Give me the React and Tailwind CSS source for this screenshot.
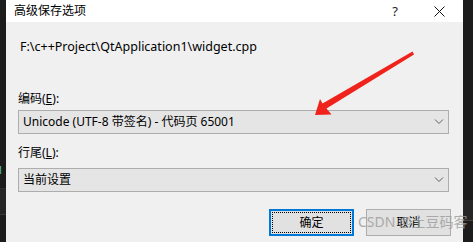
import { useState } from 'react';

const cjk = { fontFamily: '"Noto Sans", "Noto Sans CJK SC", sans-serif' };

function Chevron() {
  return (
    <svg className="w-[10px] h-[6px]" viewBox="0 0 10 6" fill="none" stroke="#5f5f5f" strokeWidth="1">
      <path d="M1 0.5L5 4.5L9 0.5" />
    </svg>
  );
}

function ComboBox({ value }) {
  return (
    <div className="mr-[2px] h-[24px] bg-[#e5e5e5] border border-[#adadad] flex items-center justify-between pl-[4px] pr-[4px]">
      <span className="text-[12px] leading-[16px] text-black">{value}</span>
      <Chevron />
    </div>
  );
}

export default function App() {
  const [encoding] = useState('Unicode (UTF-8 带签名) - 代码页 65001');

  return (
    <div className="relative flex w-[473px] h-[242px] bg-[#1c1c1c] overflow-hidden" style={cjk}>
      {/* editor behind, left edge */}
      <div className="w-[6px] flex flex-col">
        <div className="h-[165px]" />
        <div className="h-[10px] text-[11px] leading-[10px] text-[#4ec9b0] -ml-[3px]">1</div>
        <div className="h-[13px]" />
        <div className="h-[26px] bg-[#252526] border-t border-[#2f2f2f]" />
        <div className="h-px bg-[#3a3a3a]" />
      </div>

      {/* dialog */}
      <div className="w-[457px] flex flex-col">
        {/* title bar */}
        <div className="h-[22px] bg-white flex items-center pl-[8px]">
          <span className="text-[12px] leading-[16px] text-black">高级保存选项</span>
          <span className="ml-auto text-[13px] leading-[16px] text-[#222] mr-[36px]">?</span>
          <svg className="w-[11px] h-[11px] mr-[18px]" viewBox="0 0 11 11" stroke="#111" strokeWidth="1">
            <path d="M0.5 0.5L10.5 10.5M10.5 0.5L0.5 10.5" />
          </svg>
        </div>

        {/* body */}
        <div className="flex-1 bg-[#f0f0f0] pl-[12px] pr-[12px] flex flex-col">
          <div className="mt-[17px] ml-[2px] h-[16px] text-[12.5px] leading-[16px] text-black">
            F:\c++Project\QtApplication1\widget.cpp
          </div>

          <div className="mt-[36px] h-[16px] text-[12px] leading-[16px] text-black">
            编码(<span className="underline">E</span>):
          </div>
          <div className="mt-[3px]">
            <ComboBox value={encoding} />
          </div>

          <div className="mt-[11px] h-[16px] text-[12px] leading-[16px] text-black">
            行尾(<span className="underline">L</span>):
          </div>
          <div className="mt-[7px]">
            <ComboBox value="当前设置" />
          </div>

          <div className="mt-[17px] flex justify-end gap-[12px]">
            <button className="w-[85px] h-[27px] bg-[#e1e1e1] border-2 border-[#0078d7] p-[1px] flex">
              <span className="flex-1 border border-dotted border-black flex items-center justify-center text-[12px] text-black">
                确定
              </span>
            </button>
            <button className="w-[85px] h-[27px] bg-[#e1e1e1] border border-[#adadad] flex items-center justify-center text-[12px] text-black">
              取消
            </button>
          </div>
        </div>
      </div>

      {/* editor behind, right edge */}
      <div className="flex-1 flex flex-col">
        <div className="h-[200px]" />
        <div className="h-[20px] bg-[#262626]" />
        <div className="h-px bg-[#444]" />
      </div>

      {/* annotation arrow */}
      <svg className="absolute left-0 top-0 w-[473px] h-[242px] pointer-events-none" viewBox="0 0 473 242">
        <polygon
          fill="#f0231c"
          points="412.5,51.5 414,54.5 326.5,108.5 331.5,114.5 315,115 320,99 322.5,103.5"
        />
      </svg>

      {/* watermark */}
      <div className="absolute left-[358px] top-[212px] text-[14px] leading-[20px] text-[#9c9c9c] opacity-80 whitespace-nowrap pointer-events-none">
        CSDN @土豆码客
      </div>
    </div>
  );
}
